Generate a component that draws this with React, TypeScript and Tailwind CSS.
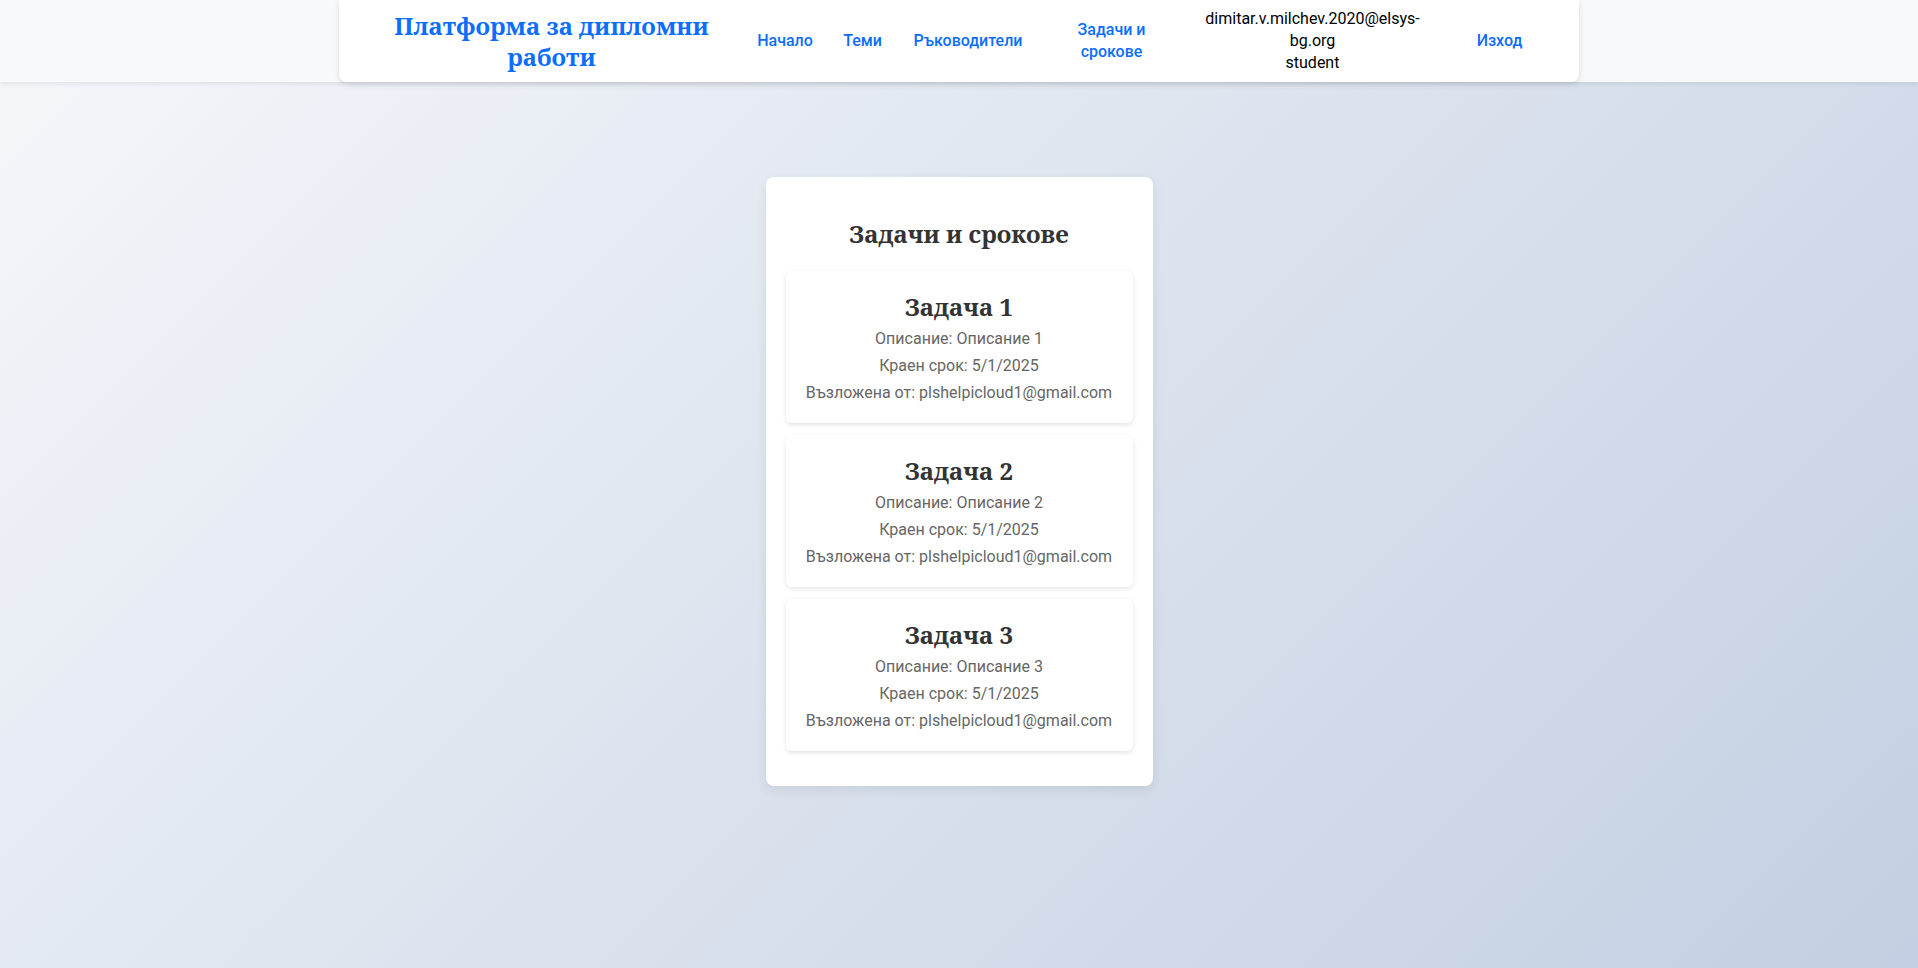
import React from "react";

const tasks = [1, 2, 3].map((n) => ({
  title: `Задача ${n}`,
  desc: `Описание ${n}`,
  deadline: "5/1/2025",
  by: "plshelpicloud1@gmail.com",
}));

const serif = "'Noto Serif', 'DejaVu Serif Condensed', 'DejaVu Serif', serif";

export default function App() {
  return (
    <div
      className="min-h-screen w-full bg-[linear-gradient(135deg,#f5f7fa_0%,#c3cfe2_100%)] text-[16px]"
      style={{ fontFamily: "Roboto, 'Noto Sans', sans-serif" }}
    >
      <div className="w-full h-[82px] bg-[#f8f9fa] shadow-[0_2px_4px_rgba(0,0,0,0.08)]">
        <header className="mx-auto w-[1240px] h-[82px] bg-white rounded-b-lg shadow-[0_2px_6px_rgba(0,0,0,0.12)] flex items-center pl-[40px] leading-[22px]">
          <div
            className="w-[345px] text-center text-[#0d6efd] font-bold text-[24px] leading-[31.5px] [font-stretch:semi-condensed]"
            style={{ fontFamily: serif }}
          >
            Платформа за дипломни работи
          </div>
          <nav className="flex items-center ml-[21px]">
            <a className="w-[80px] text-center text-[#0d6efd] font-medium">Начало</a>
            <a className="w-[75px] text-center text-[#0d6efd] font-medium">Теми</a>
            <a className="w-[136px] text-center text-[#0d6efd] font-medium">Ръководители</a>
            <div className="w-[151px] flex justify-center">
              <a className="w-[80px] text-center text-[#0d6efd] font-medium">Задачи и срокове</a>
            </div>
            <div className="w-[251px] flex justify-center">
              <div className="w-[222px] text-center text-black">
                <div>dimitar.v.milchev.2020@elsys-bg.org</div>
                <div>student</div>
              </div>
            </div>
            <a className="w-[123px] text-center text-[#0d6efd] font-medium">Изход</a>
          </nav>
        </header>
      </div>

      <main className="mx-auto mt-[95px] w-[387px] bg-white rounded-lg shadow-[0_4px_12px_rgba(0,0,0,0.08)] px-[20px] pt-[20px] pb-[35px]">
        <h2
          className="mt-[23px] mb-[23px] text-center text-[24px] leading-[28px] font-bold text-[#333] [font-stretch:semi-condensed]"
          style={{ fontFamily: serif }}
        >
          Задачи и срокове
        </h2>
        <div className="flex flex-col gap-[12px]">
          {tasks.map((t) => (
            <div
              key={t.title}
              className="bg-white rounded-md shadow-[0_2px_5px_rgba(0,0,0,0.1)] pt-[22px] pb-[19px] px-[10px] text-center"
            >
              <h3
                className="text-[24px] leading-[28px] font-bold text-[#333] mb-[7px] [font-stretch:semi-condensed]"
                style={{ fontFamily: serif }}
              >
                {t.title}
              </h3>
              <div className="flex flex-col gap-[5px] text-[#666] leading-[22px]">
                <p>Описание: {t.desc}</p>
                <p>Краен срок: {t.deadline}</p>
                <p>Възложена от: {t.by}</p>
              </div>
            </div>
          ))}
        </div>
      </main>
    </div>
  );
}
